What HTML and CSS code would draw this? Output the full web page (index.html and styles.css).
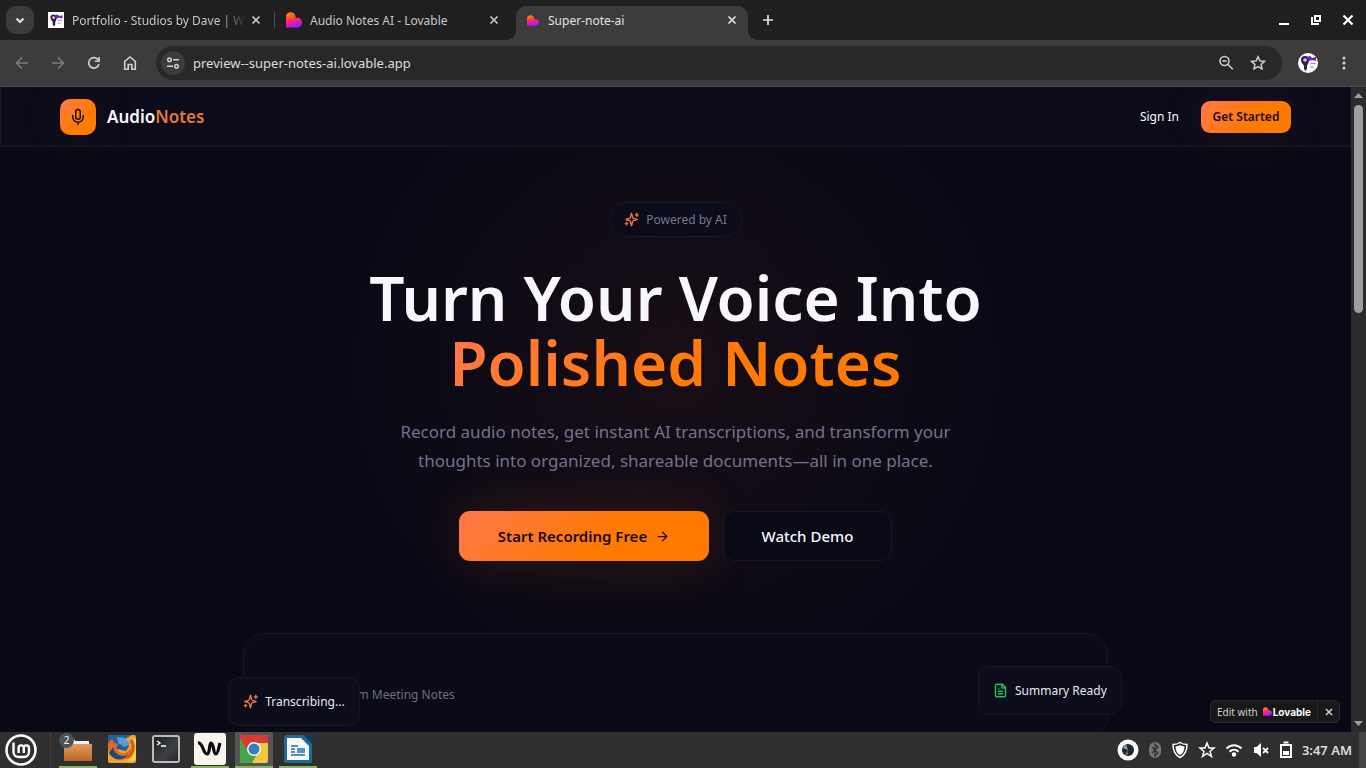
FILE: index.html
```
<!DOCTYPE html>
<html lang="en">
<head>
  <meta charset="UTF-8">
  <meta name="viewport" content="width=device-width, initial-scale=1.0">
  <title>Super-note-ai</title>
  <link rel="stylesheet" href="styles.css">
</head>
<body>
  <!-- shared shapes -->
  <svg class="defs" width="0" height="0" aria-hidden="true">
    <defs>
      <linearGradient id="heart" x1="0.3" y1="0" x2="0.6" y2="1">
        <stop offset="0.1" stop-color="#ff7a1a"/>
        <stop offset="0.4" stop-color="#ff3f3a"/>
        <stop offset="0.7" stop-color="#e413bd"/>
        <stop offset="1" stop-color="#8a22ff"/>
      </linearGradient>
      <linearGradient id="folder" x1="0" y1="0" x2="0" y2="1">
        <stop offset="0" stop-color="#e59a5c"/>
        <stop offset="1" stop-color="#b9682c"/>
      </linearGradient>
      <linearGradient id="term" x1="0" y1="0" x2="1" y2="1">
        <stop offset="0" stop-color="#1c1e20"/>
        <stop offset="0.6" stop-color="#3e4144"/>
        <stop offset="1" stop-color="#222426"/>
      </linearGradient>
    </defs>
    <symbol id="lovable" viewBox="0 0 16 16">
      <path fill="url(#heart)" d="M0 4.500C0 2 2 .3 4.700.3S9.600 2.500 9.600 5v.8h2C14 5.800 16 8 16 10.500s-2 5-4.500 5H0z"/>
    </symbol>
    <symbol id="close" viewBox="0 0 16 16">
      <path d="M4.500 4.500l7 7M11.500 4.500l-7 7" fill="none" stroke="currentColor" stroke-width="1.700"/>
    </symbol>
    <symbol id="sparkles" viewBox="0 0 24 24">
      <g fill="none" stroke="currentColor" stroke-width="2.200" stroke-linecap="round" stroke-linejoin="round">
        <path d="m12 2-1.900 6.800a2 2 0 0 1-1.300 1.300L3 12l5.800 1.900a2 2 0 0 1 1.300 1.300L12 22l1.900-6.800a2 2 0 0 1 1.300-1.300L21 12l-5.800-1.900a2 2 0 0 1-1.300-1.300z"/>
        <path d="M20.500 2v5M23 4.500h-5M4 16.500v4M6 18.500H2"/>
      </g>
    </symbol>
    <symbol id="avatar" viewBox="0 0 20 20">
      <rect width="20" height="20" fill="#fff"/>
      <path fill="#32204f" d="M3 7a4 4 0 0 1 8 0c0 3-1.500 4-2 6v3l-1.500 2L6 16v-3C5.500 11 3 10 3 7z"/>
      <circle cx="7" cy="7" r="1.800" fill="#cfc6e0"/>
      <path d="M8 4l4-1 2 2 4-1v4l-4-1-3 1z" fill="#6d22b5"/>
      <path d="M12 11l2-1 1 1 3-1M12 14h4" stroke="#9878bd" fill="none"/>
    </symbol>
  </svg>

  <div class="tabstrip">
    <button class="tab-search" aria-label="Search tabs">
      <svg width="12" height="12" viewBox="0 0 12 12"><path d="M2.500 4.500L6 8l3.500-3.500" fill="none" stroke="currentColor" stroke-width="2"/></svg>
    </button>
    <div class="tab tab-first">
      <svg width="16" height="16"><use href="#avatar"/></svg>
      <span class="tab-title fade">Portfolio - Studios by Dave | W</span>
      <button aria-label="Close tab"><svg width="16" height="16"><use href="#close"/></svg></button>
    </div>
    <div class="tab tab-second">
      <svg width="16" height="16"><use href="#lovable"/></svg>
      <span class="tab-title">Audio Notes AI - Lovable</span>
      <button aria-label="Close tab"><svg width="16" height="16"><use href="#close"/></svg></button>
    </div>
    <div class="tab active">
      <svg width="12" height="11" viewBox="0 0 16 16" preserveAspectRatio="none"><use href="#lovable"/></svg>
      <span class="tab-title">Super-note-ai</span>
      <button aria-label="Close tab"><svg width="16" height="16"><use href="#close"/></svg></button>
    </div>
    <button class="new-tab" aria-label="New tab">
      <svg width="12" height="12" viewBox="0 0 12 12"><path d="M6 1v10M1 6h10" stroke="currentColor" stroke-width="1.700"/></svg>
    </button>
    <div class="window-controls">
      <button aria-label="Minimize"><svg width="12" height="12" viewBox="0 0 12 12"><path d="M1 10h10" stroke="currentColor" stroke-width="2"/></svg></button>
      <button aria-label="Restore"><svg width="12" height="12" viewBox="0 0 12 12" fill="none" stroke="currentColor" stroke-width="2"><path d="M5 2h5v5H5zM2 3v7h7"/></svg></button>
      <button aria-label="Close window"><svg width="12" height="12" viewBox="0 0 12 12"><path d="M1.500 1.500l9 9M10.500 1.500l-9 9" stroke="currentColor" stroke-width="2.200"/></svg></button>
    </div>
  </div>

  <div class="toolbar">
    <button class="dim" aria-label="Back"><svg width="16" height="16" viewBox="0 0 16 16"><path d="M14 8H2.500M8 2.500L2.500 8 8 13.500" fill="none" stroke="currentColor" stroke-width="1.600"/></svg></button>
    <button class="dim" aria-label="Forward"><svg width="16" height="16" viewBox="0 0 16 16"><path d="M2 8h11.500M8 2.500L13.500 8 8 13.500" fill="none" stroke="currentColor" stroke-width="1.600"/></svg></button>
    <button aria-label="Reload"><svg width="16" height="16" viewBox="0 0 16 16"><path d="M13 9a5.200 5.200 0 1 1-1.300-4.700L13.200 6" fill="none" stroke="currentColor" stroke-width="1.700"/><path d="M13.800 2v5H8.800V5.400h3.400V2z" fill="currentColor"/></svg></button>
    <button aria-label="Home"><svg width="16" height="16" viewBox="0 0 16 16"><path d="M2.700 14.200V6.300L8 2l5.300 4.300v7.900H9.800V9.500H6.200v4.700z" fill="none" stroke="currentColor" stroke-width="1.600"/></svg></button>
    <div class="omnibox">
      <button class="site-info" aria-label="View site information">
        <svg width="14" height="14" viewBox="0 0 14 14" fill="none" stroke="currentColor" stroke-width="1.500"><circle cx="3.500" cy="3.700" r="1.800"/><path d="M7 3.700h6M1 10.300h6"/><circle cx="10.500" cy="10.300" r="1.800"/></svg>
      </button>
      <input type="text" value="preview--super-notes-ai.lovable.app" aria-label="Address">
      <button aria-label="Zoom"><svg width="16" height="16" viewBox="0 0 16 16" fill="none" stroke="currentColor" stroke-width="1.600"><circle cx="6.500" cy="6" r="4.500"/><path d="M4.300 6h4.400M9.800 9.300l5 5"/></svg></button>
      <button aria-label="Bookmark"><svg width="16" height="16" viewBox="0 0 16 16"><path d="M8 1.800l1.900 4.100 4.500.5-3.300 3 .9 4.500L8 11.600l-4 2.300.9-4.500-3.300-3 4.500-.5z" fill="none" stroke="currentColor" stroke-width="1.500"/></svg></button>
    </div>
    <button class="profile" aria-label="Profile"><svg width="20" height="20"><use href="#avatar"/></svg></button>
    <button aria-label="Menu"><svg width="16" height="16" viewBox="0 0 16 16" fill="currentColor"><circle cx="8" cy="3" r="1.600"/><circle cx="8" cy="8" r="1.600"/><circle cx="8" cy="13" r="1.600"/></svg></button>
  </div>

  <div class="viewport">
    <div class="page">
      <header class="navbar">
        <a class="brand" href="#">
          <span class="brand-icon">
            <svg width="18" height="18" viewBox="0 0 24 24" fill="none" stroke="currentColor" stroke-width="2" stroke-linecap="round" stroke-linejoin="round"><path d="M12 2a3 3 0 0 0-3 3v7a3 3 0 0 0 6 0V5a3 3 0 0 0-3-3z"/><path d="M19 10v2a7 7 0 0 1-14 0v-2M12 19v3"/></svg>
          </span>
          <span>Audio<span class="brand-accent">Notes</span></span>
        </a>
        <nav>
          <a class="sign-in" href="#">Sign In</a>
          <button class="btn-primary btn-small">Get Started</button>
        </nav>
      </header>

      <main class="hero">
        <div class="badge">
          <svg width="15" height="15"><use href="#sparkles"/></svg>
          <span>Powered by AI</span>
        </div>
        <h1>Turn Your Voice Into<br><span class="gradient-text">Polished Notes</span></h1>
        <p>Record audio notes, get instant AI transcriptions, and transform your<br>thoughts into organized, shareable documents—all in one place.</p>
        <div class="actions">
          <button class="btn-primary btn-large">Start Recording Free
            <svg width="15" height="15" viewBox="0 0 24 24" fill="none" stroke="currentColor" stroke-width="2" stroke-linecap="round" stroke-linejoin="round"><path d="M5 12h14M12 5l7 7-7 7"/></svg>
          </button>
          <button class="btn-outline">Watch Demo</button>
        </div>

        <section class="preview">
          <span class="preview-title">Team Meeting Notes</span>
          <div class="chip chip-left"><svg class="orange" width="15" height="15"><use href="#sparkles"/></svg>Transcribing...</div>
          <div class="chip chip-right">
            <svg class="green" width="15" height="15" viewBox="0 0 24 24" fill="none" stroke="currentColor" stroke-width="2.400" stroke-linejoin="round"><path d="M15 2H6a2 2 0 0 0-2 2v16a2 2 0 0 0 2 2h12a2 2 0 0 0 2-2V7z"/><path d="M14 2v4a2 2 0 0 0 2 2h4M10 9H8M16 13H8M16 17H8"/></svg>Summary Ready
          </div>
        </section>
      </main>

      <div class="lovable-badge">
        <a href="#">Edit with <svg width="9" height="9"><use href="#lovable"/></svg><strong>Lovable</strong></a>
        <button aria-label="Hide badge"><svg width="14" height="14"><use href="#close"/></svg></button>
      </div>
    </div>
    <div class="scrollbar">
      <svg width="9" height="5" viewBox="0 0 9 5"><path d="M0 5L4.500 0 9 5z" fill="currentColor"/></svg>
      <div class="thumb"></div>
      <svg width="9" height="5" viewBox="0 0 9 5"><path d="M0 0l4.500 5L9 0z" fill="currentColor"/></svg>
    </div>
  </div>

  <footer class="taskbar">
    <button class="start" aria-label="Menu">
      <svg width="32" height="32" viewBox="0 0 32 32" fill="none" stroke="#fff"><circle cx="16" cy="16" r="14.500" stroke-width="2.500"/><path d="M8.500 8.500V18a5 5 0 0 0 5 5h5.500a5 5 0 0 0 5-5v-4a2.600 2.600 0 0 0-5.200 0v5M18.800 14a2.600 2.600 0 0 0-5.200 0v5" stroke-width="2.400"/></svg>
    </button>
    <div class="apps">
      <button class="app open files" aria-label="Files">
        <svg width="32" height="30" viewBox="0 0 32 30"><path d="M2 6h10l2 3h14v5H2z" fill="#9d5526"/><path d="M10 5h2l1 2h14v5H10z" fill="#f5f3ef"/><rect x="2" y="10" width="28" height="17" rx="1" fill="url(#folder)"/></svg>
        <span class="count">2</span>
      </button>
      <button class="app" aria-label="Firefox">
        <svg width="30" height="30" viewBox="0 0 30 30"><rect x="1" y="1" width="28" height="28" rx="2" fill="#eda52e"/><path d="M1 3a2 2 0 0 1 2-2h22l-7 4 4 7-3 5-9-2-5-6-4 5z" fill="#235f9c"/><path d="M10 3l8 1 5 6-5 3-7-4z" fill="#52a0d4"/><path d="M1 9l4-4 2 4 4 1-2 4 3 4c5 3 10 0 11-4 3 6-2 12-9 12C7 26 2 21 1 15z" fill="#e36b20"/><path d="M6 13c1 7 8 11 15 8-6 7-15 5-19-2z" fill="#194b80"/><path d="M24 3c7 8 5 19-5 24h8l2-2V5z" fill="#f3cd43"/><path d="M24 6c4 7 2 14-4 18" fill="none" stroke="#cf5b20" stroke-width="3"/></svg>
      </button>
      <button class="app" aria-label="Terminal">
        <svg width="30" height="30" viewBox="0 0 30 30"><rect x="2" y="2" width="26" height="26" rx="2" fill="url(#term)" stroke="#b9bbbd" stroke-width="2"/><path d="M6 7l3 2-3 2M10 12h5" fill="none" stroke="#fff" stroke-width="1.300"/></svg>
      </button>
      <button class="app open" aria-label="Warp">
        <svg width="32" height="32" viewBox="0 0 32 32"><rect width="32" height="32" rx="3" fill="#f7f5ec"/><path d="M4 10c5-1 5 11 9 11 3 0 2-10 4-11 3 0 2 11 5 11 2 0 3-8 4-11" fill="none" stroke="#090909" stroke-width="3.200"/></svg>
      </button>
      <button class="app open current" aria-label="Chrome">
        <svg width="30" height="30" viewBox="0 0 30 30"><rect x="1" y="1" width="28" height="28" rx="2" fill="#f1c83c"/><path d="M1 3a2 2 0 0 1 2-2h24a2 2 0 0 1 2 2v6H15L8 17 1 5z" fill="#d83b32"/><path d="M1 5l9 13 8 2-5 9H3a2 2 0 0 1-2-2z" fill="#49a349"/><circle cx="15" cy="15" r="7" fill="#f5f5f5"/><circle cx="15" cy="15" r="5.500" fill="#347fbd"/></svg>
      </button>
      <button class="app open" aria-label="Writer">
        <svg width="30" height="30" viewBox="0 0 30 30"><path d="M3 1h18l8 8v18a2 2 0 0 1-2 2H3a2 2 0 0 1-2-2V3z" fill="#236998"/><path d="M4 4h14l8 8v14H4z" fill="#f5f8fa"/><path d="M20 1h9v9z" fill="#103f64"/><path d="M8 12h7M8 15h4M8 18h4M8 21h14" stroke="#286c99" stroke-width="1.500"/><path d="M14 14h8v5h-8z" fill="#4f96bb"/></svg>
      </button>
    </div>
    <div class="tray">
      <svg width="22" height="22" viewBox="0 0 22 22"><circle cx="11" cy="11" r="10.500" fill="#f8f8f8"/><circle cx="11" cy="11" r="6" fill="#20262c"/><path d="M11 11L6 9l3-4z" fill="#7ea5c9"/><path d="M11 11l-4 5h4z" fill="#725e4a"/></svg>
      <svg width="14" height="18" viewBox="0 0 14 18"><rect x="1" y="1" width="12" height="16" rx="6" fill="#747474"/><path d="M4 6l6 6-3 3V3l3 3-6 6" fill="none" stroke="#303030" stroke-width="1.200"/></svg>
      <svg width="18" height="18" viewBox="0 0 18 18"><path d="M9 1.500c2 1.500 4.500 2 7 2C16 9 14 14 9 16.500 4 14 2 9 2 3.500c2.500 0 5-.5 7-2z" fill="none" stroke="#fff" stroke-width="1.500"/><path d="M9 4c1.500 1 3 1.300 4.500 1.400C13.400 9.500 12 12.500 9 14c-3-1.500-4.400-4.500-4.500-8.600C6 5.300 7.500 5 9 4z" fill="#fff"/></svg>
      <svg width="18" height="18" viewBox="0 0 18 18"><path d="M9 2l2 5h5l-4 3.500 1.500 5L9 12.500l-4.500 3 1.500-5L2 7h5z" fill="none" stroke="#fff" stroke-width="1.500"/></svg>
      <svg width="18" height="18" viewBox="0 0 18 18" fill="none" stroke="#fff" stroke-width="2"><path d="M1.500 7.500c4.500-4.500 10.500-4.500 15 0M4.500 10.700c2.700-2.700 6.300-2.700 9 0"/><circle cx="9" cy="13.500" r="1.200" fill="#fff"/></svg>
      <svg width="18" height="18" viewBox="0 0 18 18"><path d="M2 6h2.500L9 2v14l-4.500-4H2z" fill="#fff"/><path d="M11 7l5 5M16 7l-5 5" stroke="#fff" stroke-width="1.800"/></svg>
      <svg width="14" height="18" viewBox="0 0 14 18"><path d="M4.500 1.500h5M2 4h10v12H2z" fill="none" stroke="#fff" stroke-width="2"/><path d="M4 10h6v4H4z" fill="#fff"/></svg>
      <time>3:47 AM</time>
    </div>
    <div class="show-desktop"></div>
  </footer>
</body>
</html>
```
FILE: styles.css
```
* {
  box-sizing: border-box;
}

body {
  margin: 0;
  height: 100vh;
  display: flex;
  flex-direction: column;
  overflow: hidden;
  font-family: "Noto Sans", "Open Sans", sans-serif;
  font-size: 12px;
  color: #f8f8fc;
  background: #090916;
}

button {
  display: flex;
  align-items: center;
  justify-content: center;
  padding: 0;
  border: 0;
  background: none;
  color: inherit;
  font: inherit;
  cursor: pointer;
}

a {
  color: inherit;
  text-decoration: none;
}

svg {
  flex: none;
}

.defs {
  position: absolute;
}

/* browser window */
.tabstrip {
  display: flex;
  align-items: center;
  height: 40px;
  flex: none;
  padding-left: 6px;
  background: #1f1f1f;
  color: #e4e4e4;
}

.tab-search {
  width: 28px;
  height: 28px;
  border-radius: 10px;
  background: #3c3c3c;
}

.tab {
  display: flex;
  align-items: center;
  gap: 8px;
  height: 34px;
  padding: 0 8px 0 10px;
  color: #c7c7c7;
}

.tab-first {
  width: 234px;
  margin-left: 4px;
}

.tab-first button {
  margin-left: -6px;
}

.tab-second {
  width: 238px;
  padding-left: 14px;
}

.tab-second::before {
  content: "";
  width: 1px;
  height: 16px;
  margin: 0 3px 0 -12px;
  background: #4a4a4a;
}

.tab-title {
  flex: 1;
  overflow: hidden;
  white-space: nowrap;
}

.fade {
  mask-image: linear-gradient(90deg, #000 85%, transparent);
}

.tab.active {
  position: relative;
  width: 232px;
  margin-left: 6px;
  padding: 0 8px 6px 11px;
  gap: 9px;
  align-self: flex-end;
  border-radius: 10px 10px 0 0;
  background: #3c3c3c;
  color: #e3e3e3;
}

.tab.active::before,
.tab.active::after {
  content: "";
  position: absolute;
  bottom: 0;
  width: 10px;
  height: 10px;
}

.tab.active::before {
  left: -10px;
  background: radial-gradient(circle at 0 0, transparent 10px, #3c3c3c 10px);
}

.tab.active::after {
  right: -10px;
  background: radial-gradient(circle at 100% 0, transparent 10px, #3c3c3c 10px);
}

.new-tab {
  width: 28px;
  height: 28px;
  margin-left: 6px;
}

.window-controls {
  display: flex;
  gap: 20px;
  margin-left: auto;
  padding-right: 12px;
  color: #fff;
}

.toolbar {
  display: flex;
  align-items: center;
  gap: 20px;
  height: 47px;
  flex: none;
  padding: 0 14px;
  background: #3c3c3c;
  border-bottom: 1px solid #4a4a50;
  color: #d0d0d0;
}

.dim {
  color: #7c7c7c;
}

.omnibox {
  flex: 1;
  display: flex;
  align-items: center;
  gap: 16px;
  height: 34px;
  margin: 0 -2px;
  padding: 0 16px 0 5px;
  border-radius: 17px;
  background: #282828;
}

.omnibox input {
  flex: 1;
  min-width: 0;
  margin-left: -8px;
  padding: 0;
  border: 0;
  outline: 0;
  background: none;
  color: #dedede;
  font: inherit;
  font-size: 13px;
}

.site-info {
  width: 24px;
  height: 24px;
  border-radius: 50%;
  background: #3c3c3c;
}

.profile {
  border-radius: 50%;
  overflow: hidden;
  margin: 0 -2px;
}

/* web page */
.viewport {
  flex: 1;
  min-height: 0;
  display: flex;
}

.page {
  position: relative;
  flex: 1;
  overflow: hidden;
  background:
    radial-gradient(circle at 50% 280px, rgba(255, 80, 30, 0.060), transparent 330px),
    #090915;
}

.navbar {
  display: flex;
  align-items: center;
  justify-content: space-between;
  height: 60px;
  padding: 0 59px;
  background: #0c0b1a;
  border: 1px solid #171728;
  border-top: 0;
}

.brand {
  display: flex;
  align-items: center;
  gap: 11px;
  font-size: 17px;
  font-weight: 600;
}

.brand-icon {
  display: grid;
  place-items: center;
  width: 36px;
  height: 36px;
  border-radius: 10px;
  background: linear-gradient(135deg, #ff7a4d, #ff7b00 60%);
  color: #1b0e12;
  box-shadow: 0 0 50px rgba(255, 110, 40, 0.100);
}

.brand-accent {
  color: #e17a3b;
}

nav {
  display: flex;
  align-items: center;
  gap: 22px;
}

.btn-primary {
  background: linear-gradient(135deg, #ff784b, #ff7a00 60%);
  color: #1b0b0e;
  font-weight: 600;
}

.btn-small {
  width: 90px;
  height: 32px;
  border-radius: 9px;
  box-shadow: 0 0 50px rgba(255, 110, 40, 0.100);
}

.hero {
  display: flex;
  flex-direction: column;
  align-items: center;
  padding-top: 55px;
  text-align: center;
}

.badge {
  display: flex;
  align-items: center;
  gap: 7px;
  height: 35px;
  padding: 0 14px;
  border: 1px solid #171625;
  border-radius: 18px;
  background: #0c0b1a;
  color: #77768b;
}

.badge svg,
.orange {
  color: #e97548;
}

.green {
  color: #20bd60;
}

h1 {
  margin: 28px 0 0;
  font-size: 62px;
  line-height: 65px;
  font-weight: 600;
}

.gradient-text {
  background: linear-gradient(135deg, #ff784b, #ff7a00 60%);
  background-clip: text;
  color: transparent;
}

.hero p {
  margin: 22px 0 0;
  font-size: 17px;
  line-height: 29px;
  font-weight: 400;
  color: #74738c;
}

.actions {
  display: flex;
  gap: 14px;
  margin-top: 36px;
  font-size: 15px;
}

.btn-large {
  width: 250px;
  height: 50px;
  gap: 8px;
  border-radius: 11px;
  box-shadow: 0 0 54px rgba(255, 110, 40, 0.160);
}

.btn-outline {
  width: 169px;
  height: 50px;
  border: 1px solid #171724;
  border-radius: 11px;
  background: #0a0a17;
  font-weight: 500;
}

.preview {
  position: relative;
  width: 64%;
  height: 101px;
  margin-top: 72px;
  padding: 52px 94px;
  border: 1px solid #161625;
  border-radius: 22px;
  background: #0b0a18;
  color: #6f6e80;
  text-align: left;
}

.chip {
  position: absolute;
  display: flex;
  align-items: center;
  gap: 7px;
  height: 49px;
  padding: 0 14px;
  border: 1px solid #171724;
  border-radius: 11px;
  background: #0c0c1a;
  color: #e9e9f1;
}

.chip-left {
  left: -16px;
  bottom: 12px;
}

.chip-right {
  right: -15px;
  top: 32px;
}

.lovable-badge {
  position: absolute;
  right: 11px;
  bottom: 9px;
  display: flex;
  height: 23px;
  border: 1px solid #292929;
  border-radius: 5px;
  background: #181818;
  color: #d0d0d0;
  font-size: 10px;
}

.lovable-badge a {
  display: flex;
  align-items: center;
  padding: 0 6px;
}

.lovable-badge svg {
  margin: 0 1px 0 5px;
}

.lovable-badge strong {
  color: #fff;
  font-family: Inter, sans-serif;
}

.lovable-badge button {
  width: 22px;
  border-left: 1px solid #292929;
}

.lovable-badge button svg {
  margin: 0;
}

.scrollbar {
  display: flex;
  flex-direction: column;
  align-items: center;
  width: 15px;
  padding: 6px 0;
  background: #2b2b2b;
  color: #a0a0a0;
}

.thumb {
  width: 9px;
  height: 208px;
  margin: 7px 0 auto;
  border-radius: 5px;
  background: #9f9f9f;
}

/* desktop panel */
.taskbar {
  display: flex;
  align-items: stretch;
  height: 36px;
  flex: none;
  padding-left: 5px;
  background: #2f2f2f;
}

.apps {
  display: flex;
  gap: 6px;
  margin-left: 13px;
  padding-left: 8px;
  border-left: 1px solid #414141;
}

.app {
  position: relative;
  width: 38px;
  border-bottom: 2px solid transparent;
}

.open {
  border-color: #8caf6c;
}

.current {
  background: #555;
}

.count {
  position: absolute;
  top: 1px;
  left: 0;
  width: 15px;
  height: 15px;
  border-radius: 50%;
  background: #48535a;
  font-size: 10px;
  line-height: 15px;
}

.tray {
  display: flex;
  align-items: center;
  gap: 9px;
  margin-left: auto;
  padding-right: 7px;
}

time {
  font-size: 13px;
  font-weight: 600;
  color: #ddd;
}

.show-desktop {
  width: 7px;
  background: #444;
}
```
